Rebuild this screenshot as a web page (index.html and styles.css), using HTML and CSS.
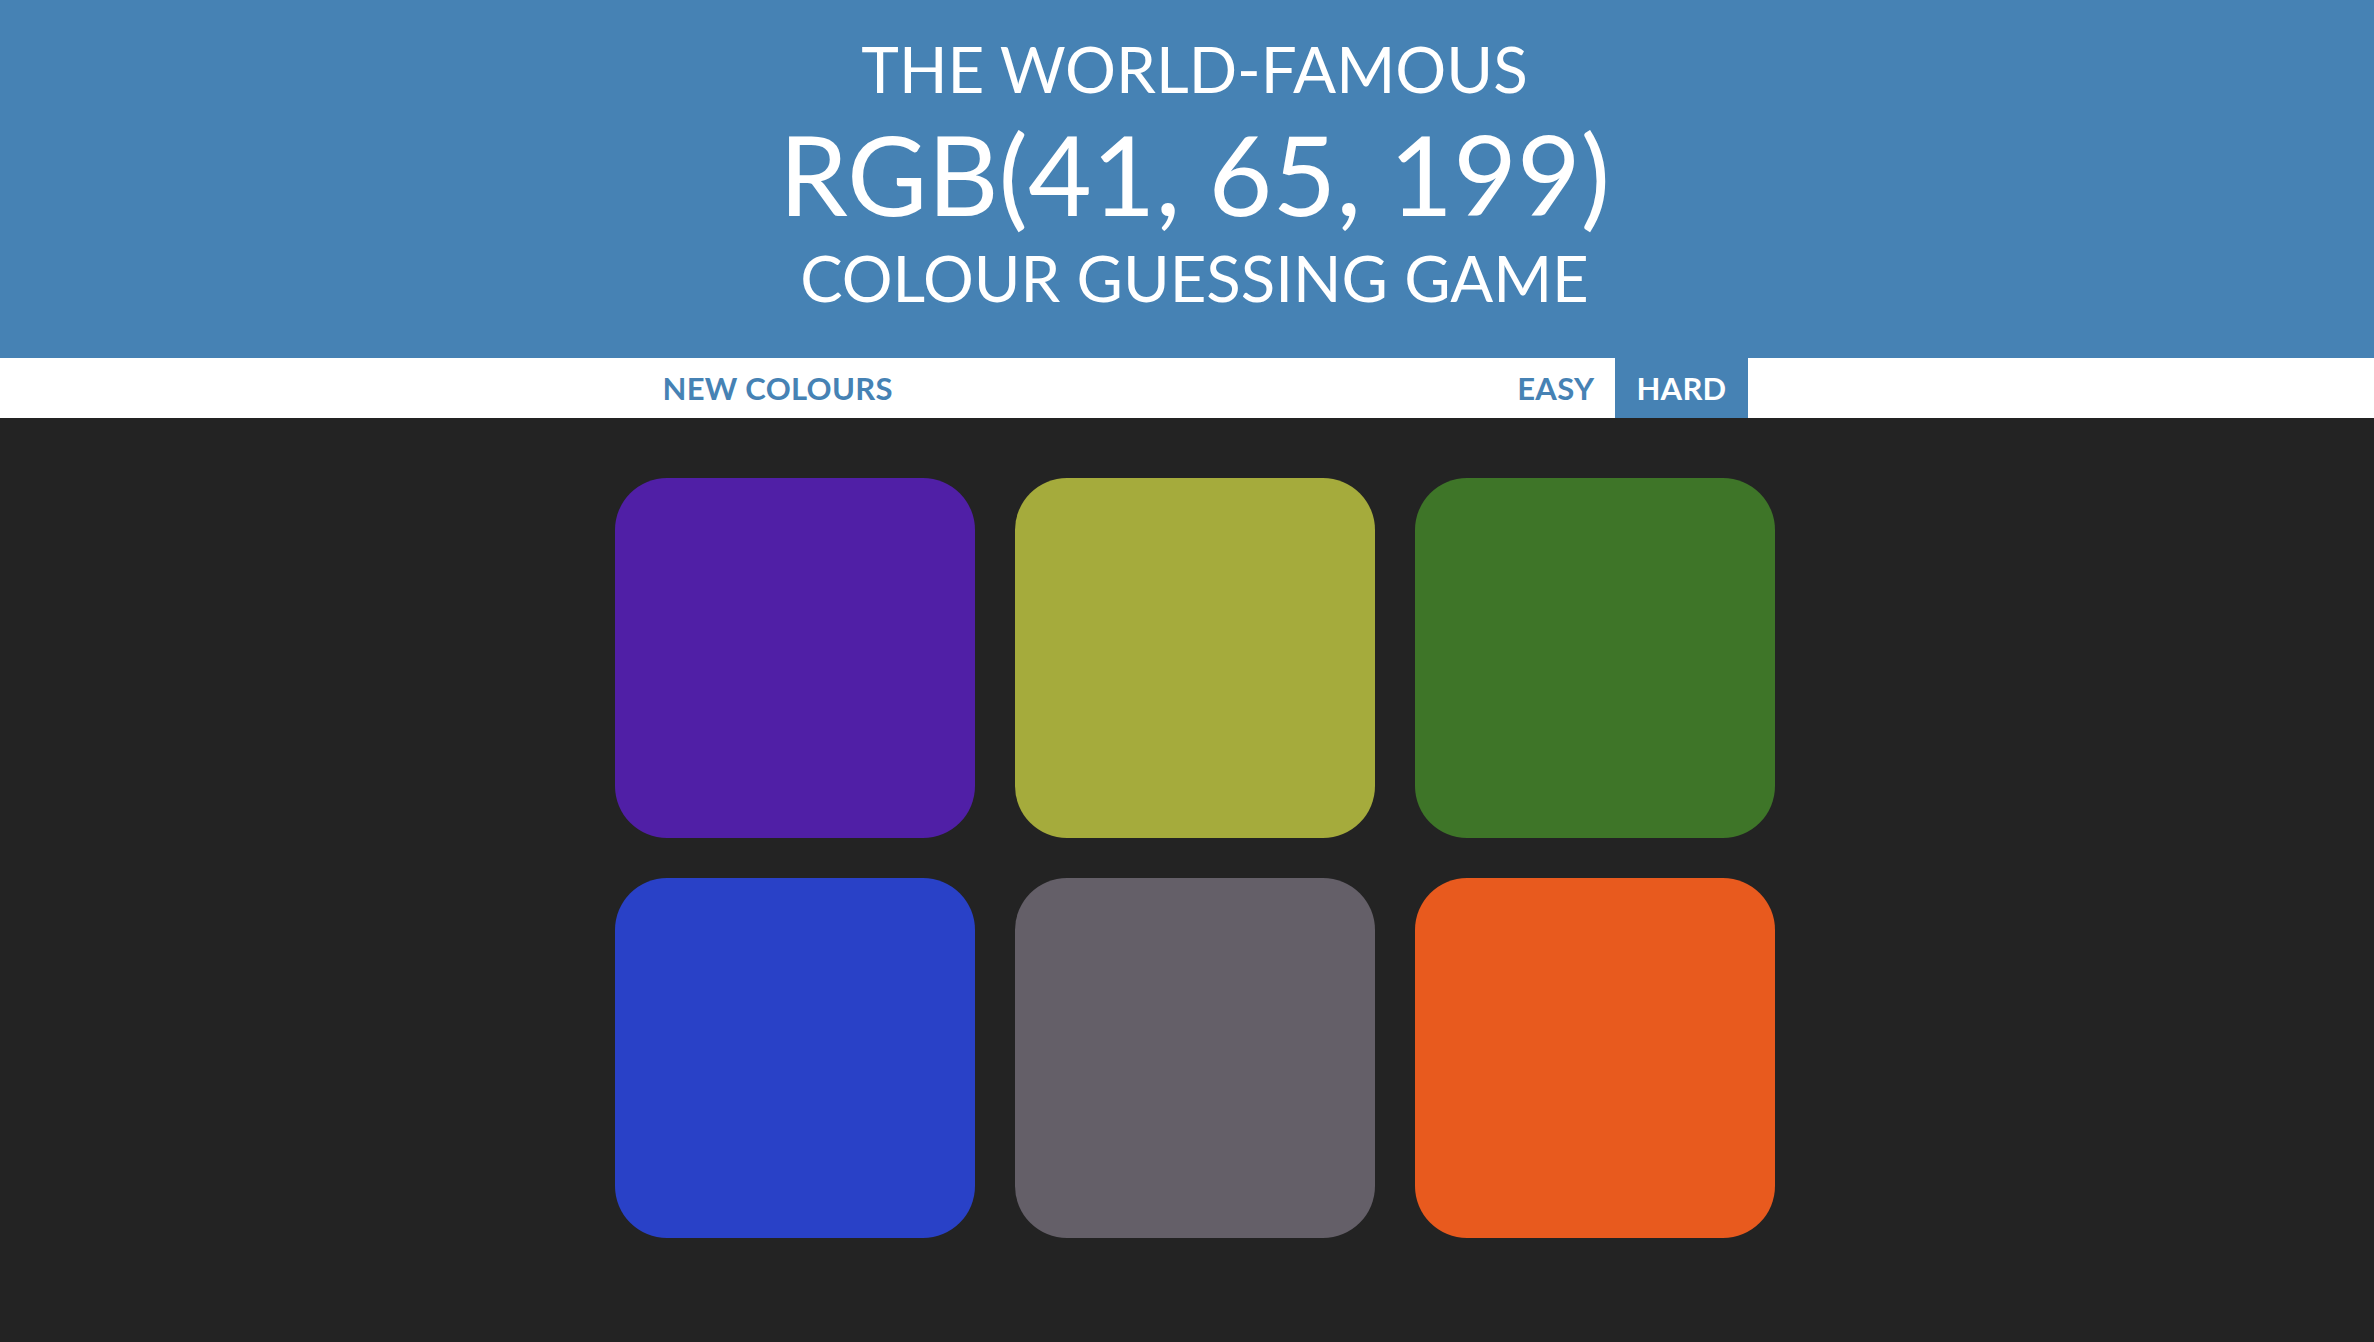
FILE: index.html
```html
<!DOCTYPE html>
<html lang="en">
<head>
<meta charset="utf-8">
<title>Colour Game</title>
<link rel="stylesheet" href="styles.css">
</head>
<body>
<header class="header">
  <h1 class="title">
    <span class="title-small">The World-Famous</span>
    <span class="title-big">RGB(41, 65, 199)</span>
    <span class="title-small title-last">Colour Guessing Game</span>
  </h1>
</header>
<nav class="stripe">
  <div class="stripe-inner">
    <button class="btn">New Colours</button>
    <span class="message"></span>
    <div class="modes">
      <button class="btn">Easy</button>
      <button class="btn btn-selected">Hard</button>
    </div>
  </div>
</nav>
<main class="board">
  <div class="grid">
    <div class="square sq-purple"></div>
    <div class="square sq-olive"></div>
    <div class="square sq-green"></div>
    <div class="square sq-blue"></div>
    <div class="square sq-grey"></div>
    <div class="square sq-orange"></div>
  </div>
</main>
</body>
</html>
```
FILE: styles.css
```css
* { box-sizing: border-box; }
html, body {
  margin: 0;
  padding: 0;
  background: #232323;
  font-family: Lato, "Liberation Sans", sans-serif;
  overflow: hidden;
}
.header {
  background: #4682b4;
  color: #fff;
  padding: 30px 0 40px 15px;
  height: 358px;
}
.title {
  margin: 0;
  font-weight: 400;
  text-transform: uppercase;
  text-align: center;
}
.title-small {
  display: block;
  font-size: 63.7px;
  line-height: 77px;
}
.title-big {
  display: block;
  font-size: 110px;
  line-height: 132px;
}
.title-last {
  font-size: 63.5px;
}
.stripe {
  background: #fff;
  height: 60px;
  padding-left: 15px;
}
.stripe-inner {
  width: 1106px;
  height: 60px;
  margin: 0 auto;
  display: flex;
  justify-content: space-between;
  align-items: stretch;
}
.modes {
  display: flex;
}
.btn {
  border: none;
  background: none;
  margin: 0;
  padding: 0 21px;
  height: 60px;
  font-family: Lato, "Liberation Sans", sans-serif;
  font-weight: 700;
  font-size: 31px;
  letter-spacing: 0.3px;
  text-transform: uppercase;
  color: #4682b4;
}
.btn-selected {
  background: #4682b4;
  color: #fff;
}
.board {
  padding: 60px 0 0 15px;
}
.grid {
  width: 1160px;
  margin: 0 auto;
  display: grid;
  grid-template-columns: repeat(3, 360px);
  grid-auto-rows: 360px;
  gap: 40px;
}
.square {
  border-radius: 52px;
}
.sq-purple { background: #501fa6; }
.sq-olive { background: #a5ab3c; }
.sq-green { background: #3e7528; }
.sq-blue { background: #2941c7; }
.sq-grey { background: #645f68; }
.sq-orange { background: #e85a1e; }
```
